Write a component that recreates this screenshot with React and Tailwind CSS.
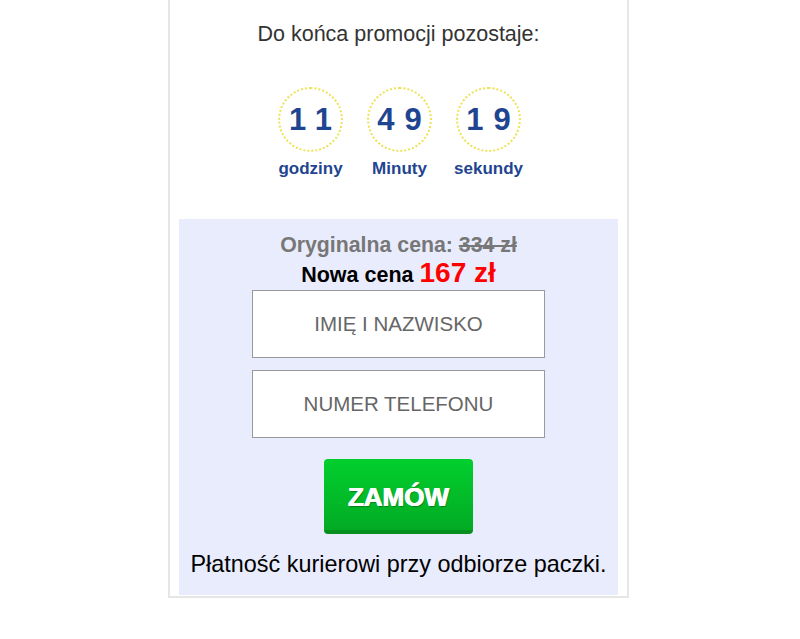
const units = [
  { value: '11', label: 'godziny' },
  { value: '49', label: 'Minuty' },
  { value: '19', label: 'sekundy' },
];

export default function App() {
  return (
    <div className="min-h-[639px] bg-white font-['Liberation_Sans',Arial,sans-serif]">
      <div className="ml-[168px] w-[461px] border-x-2 border-b-2 border-[#e6e6e6] px-[9px] pb-[1px]">
        <p className="pt-[22px] text-center text-[21.5px] leading-[24px] text-[#333]">
          Do końca promocji pozostaje:
        </p>

        <div className="mt-[41px] flex justify-center gap-[22px] pl-[2px]">
          {units.map((u) => (
            <div key={u.label} className="flex w-[67px] flex-col items-center">
              <div className="flex h-[65px] w-[65px] items-center justify-center rounded-full border-2 border-dotted border-[#ece254]">
                <span className="pl-[10px] text-[31px] font-bold leading-none tracking-[10px] text-[#1f4590]">
                  {u.value}
                </span>
              </div>
              <span className="mt-[7px] whitespace-nowrap text-[17px] font-bold leading-[20px] text-[#1f4590]">
                {u.label}
              </span>
            </div>
          ))}
        </div>

        <div className="mt-[40px] flex flex-col items-center bg-[#e9ecfd] pb-[18px] pt-[14px]">
          <p className="text-[21.3px] font-bold leading-[24px] text-[#777]">
            Oryginalna cena: <span className="line-through">334 zł</span>
          </p>
          <p className="mt-[2px] text-[21.5px] font-bold leading-[28px] text-black">
            Nowa cena <span className="text-[28px] text-[#f00]">167 zł</span>
          </p>

          <input
            placeholder="IMIĘ I NAZWISKO"
            className="mt-[1px] h-[68px] w-[293px] border border-[#999] bg-white text-center text-[20.5px] text-[#666] placeholder:text-[#666] outline-none"
          />
          <input
            placeholder="NUMER TELEFONU"
            className="mt-[12px] h-[68px] w-[293px] border border-[#999] bg-white text-center text-[20.5px] text-[#666] placeholder:text-[#666] outline-none"
          />

          <button className="mt-[21px] h-[75px] w-[149px] rounded-[4px] border-b-[4px] border-[#07901f] bg-gradient-to-b from-[#02cf2e] to-[#02ab24] pt-[5px] text-[26px] font-bold text-white [text-shadow:0.5px_0_0_#fff,-0.5px_0_0_#fff,1px_1px_1px_#0a7a1a]">
            ZAMÓW
          </button>

          <p className="mt-[17px] text-[23.4px] leading-[26px] text-black">
            Płatność kurierowi przy odbiorze paczki.
          </p>
        </div>
      </div>
    </div>
  );
}
